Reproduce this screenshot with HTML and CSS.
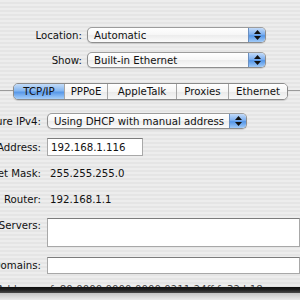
FILE: index.html
```html
<!DOCTYPE html>
<html lang="en">
<head>
    <meta charset="UTF-8">
    <meta name="viewport" content="width=device-width, initial-scale=1.0">
    <title>Network</title>
    <link rel="stylesheet" href="styles.css">
</head>
<body>
    <div id="pane">
        <div class="top">
            <div class="row">
                <div class="lbl wide">Location:</div>
                <div class="popup big"><span>Automatic</span><i class="arrows"><svg width="7" height="10" viewBox="0 0 7 10"><path d="M3.5 0L7 4H0z M3.5 10L7 6H0z" fill="#111"/></svg></i></div>
            </div>
            <div class="row">
                <div class="lbl wide">Show:</div>
                <div class="popup big"><span>Built-in Ethernet</span><i class="arrows"><svg width="7" height="10" viewBox="0 0 7 10"><path d="M3.5 0L7 4H0z M3.5 10L7 6H0z" fill="#111"/></svg></i></div>
            </div>
        </div>

        <div class="tabbar">
            <div class="line left"></div>
            <div class="tabs">
                <div class="tab on t-tcp">TCP/IP</div>
                <div class="tab t-pppoe">PPPoE</div>
                <div class="tab t-at">AppleTalk</div>
                <div class="tab t-prox">Proxies</div>
                <div class="tab t-eth">Ethernet</div>
            </div>
            <div class="line right"></div>
        </div>

        <div class="form">
            <div class="row r-ipv4">
                <div class="lbl">Configure IPv4:</div>
                <div class="popup mid"><span>Using DHCP with manual address</span><i class="arrows"><svg width="7" height="10" viewBox="0 0 7 10"><path d="M3.5 0L7 4H0z M3.5 10L7 6H0z" fill="#111"/></svg></i></div>
            </div>
            <div class="row r-ip">
                <div class="lbl">IP Address:</div>
                <div class="field small">192.168.1.116</div>
            </div>
            <div class="row r-mask">
                <div class="lbl">Subnet Mask:</div>
                <div class="value">255.255.255.0</div>
            </div>
            <div class="row r-router">
                <div class="lbl">Router:</div>
                <div class="value">192.168.1.1</div>
            </div>
            <div class="row r-dns">
                <div class="lbl">DNS Servers:</div>
                <div class="field area"></div>
            </div>
            <div class="row r-dom">
                <div class="lbl">Search Domains:</div>
                <div class="field long"></div>
            </div>
        </div>

        <div class="tail">
            <div class="v6clip">
                <div class="v6">
                    <div class="lbl">IPv6 Address:</div>
                    <div class="value">fe80:0000:0000:0000:0211:24ff:fe32:b18e</div>
                </div>
            </div>
            <div class="edge"></div>
            <div class="below"></div>
        </div>
    </div>
</body>
</html>
```

FILE: styles.css
```css
html, body
{
    margin: 0;
    padding: 0;
}
body
{
    width: 300px;
    height: 300px;
    overflow: hidden;
    font-family: "DejaVu Sans", "Liberation Sans", sans-serif;
    font-size: 10.2px;
    color: #111;
    background: repeating-linear-gradient(to bottom, #ededed 0, #ededed 2px, #e5e5e5 2px, #e5e5e5 4px);
}
#pane
{
    width: 300px;
    height: 300px;
    display: flex;
    flex-direction: column;
    overflow: hidden;
}
.row
{
    display: flex;
    align-items: center;
    height: 16px;
    flex: none;
}
.lbl
{
    width: 41px;
    flex: none;
    display: flex;
    justify-content: flex-end;
    white-space: nowrap;
    margin-right: 6px;
}
.lbl.wide
{
    width: 82px;
    margin-right: 5px;
}
.top
{
    padding-top: 27px;
    display: flex;
    flex-direction: column;
    gap: 9px;
    flex: none;
}

/* aqua popup */
.popup
{
    box-sizing: border-box;
    height: 16px;
    border: 1px solid #8e8e8e;
    border-top-color: #9c9c9c;
    border-radius: 5px;
    background: linear-gradient(#ffffff, #f6f6f6 50%, #ececec 51%, #fbfbfb);
    display: flex;
    align-items: center;
    overflow: hidden;
    box-shadow: 0 1px 1px rgba(0,0,0,0.12);
}
.popup span
{
    flex: 1;
    padding-left: 6px;
    white-space: nowrap;
}
.popup.big
{
    width: 179px;
}
.popup.mid
{
    width: 200px;
}
.arrows
{
    width: 16px;
    height: 100%;
    flex: none;
    display: flex;
    align-items: center;
    justify-content: center;
    border-left: 1px solid #6a8fc0;
    background: linear-gradient(#c2daf8, #7eb0f0 45%, #5496e8 55%, #a2cbf8);
}

/* tabs */
.tabbar
{
    margin-top: 15px;
    display: flex;
    align-items: center;
    height: 17px;
    flex: none;
}
.line
{
    height: 1px;
    background: #9a9a9a;
    margin-top: -2px;
}
.line.left
{
    width: 13px;
}
.line.right
{
    flex: 1;
}
.tabs
{
    display: flex;
    height: 17px;
    box-sizing: border-box;
    border: 1px solid #8a8a8a;
    border-radius: 5px;
    overflow: hidden;
    box-shadow: 0 1px 1px rgba(0,0,0,0.15);
}
.tab
{
    display: flex;
    align-items: center;
    justify-content: center;
    background: linear-gradient(#ffffff, #f5f5f5 50%, #e9e9e9 51%, #f7f7f7);
    border-left: 1px solid #a6a6a6;
    white-space: nowrap;
}
.tab:first-child
{
    border-left: none;
}
.tab.on
{
    background: linear-gradient(#c4dcf8, #84b6f0 45%, #5898e8 55%, #a6cffa);
}
.t-tcp   { width: 50px; }
.t-pppoe { width: 42px; }
.t-at    { width: 68px; }
.t-prox  { width: 51px; }
.t-eth   { width: 58px; }

/* form */
.form
{
    margin-top: 13px;
    display: flex;
    flex-direction: column;
    flex: none;
}
.field
{
    box-sizing: border-box;
    background: #fff;
    border: 1px solid #a8a8a8;
    border-top-color: #7c7c7c;
    padding-left: 3px;
    display: flex;
    align-items: center;
}
.field.small
{
    width: 96px;
    height: 18px;
}
.field.area
{
    width: 253px;
    height: 29px;
}
.field.long
{
    width: 253px;
    height: 17px;
}
.value
{
    padding-left: 3px;
    white-space: nowrap;
}
.r-ip
{
    margin-top: 9px;
    height: 18px;
}
.r-mask
{
    margin-top: 9px;
}
.r-router
{
    margin-top: 10px;
}
.r-dns
{
    margin-top: 11px;
    height: 29px;
    align-items: flex-start;
}
.r-dns .lbl
{
    padding-top: 2px;
}
.r-dom
{
    margin-top: 10px;
    height: 17px;
}

/* torn bottom edge of the screenshot */
.tail
{
    flex: 1;
    min-height: 0;
    display: flex;
    flex-direction: column;
    overflow: hidden;
    padding-top: 10px;
}
.v6clip
{
    height: 3px;
    flex: none;
    overflow: hidden;
}
.v6
{
    display: flex;
    line-height: 12px;
    color: #444;
}
.edge
{
    height: 6px;
    flex: none;
    background: linear-gradient(#111, #222 50%, #4a4a4a);
}
.below
{
    flex: 1;
    background: linear-gradient(#c4c4c4, #ececec);
}
```
